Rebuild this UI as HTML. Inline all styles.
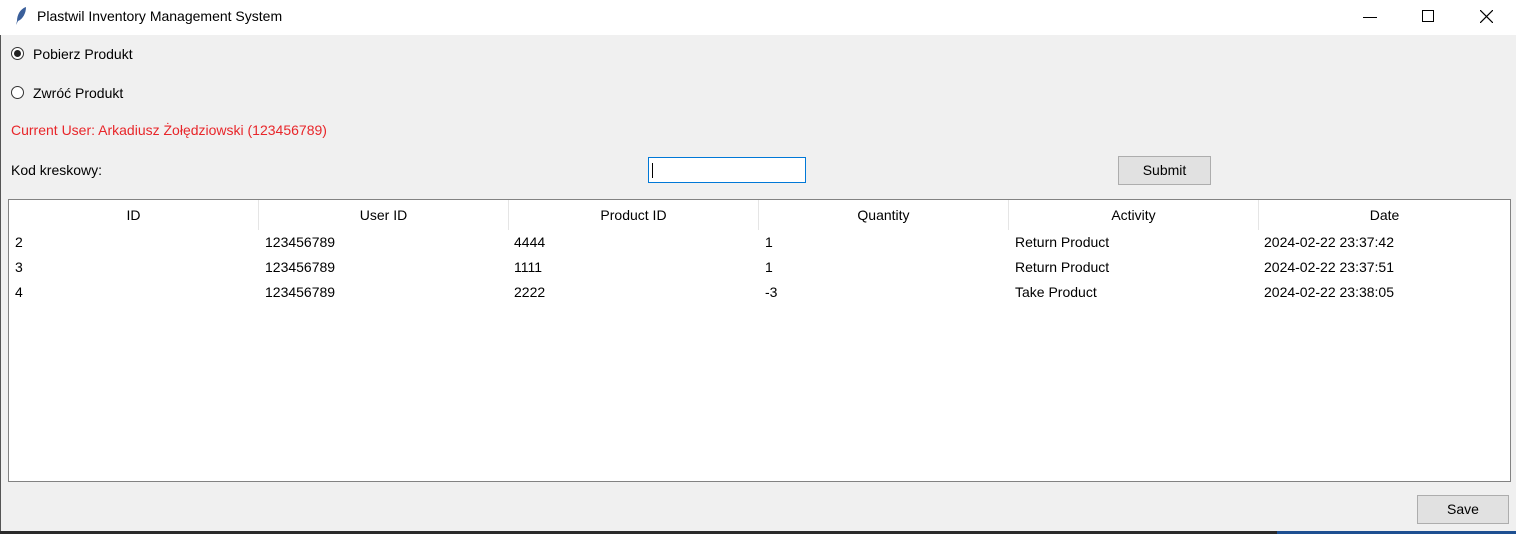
<!DOCTYPE html>
<html><head><meta charset="utf-8"><style>
body{margin:0;width:1516px;height:534px;overflow:hidden;background:#f0f0f0;font-family:"Liberation Sans","DejaVu Sans",sans-serif;font-size:14px;color:#000;position:relative}
.a{position:absolute;white-space:nowrap}
.tb{position:absolute;left:0;top:0;width:1516px;height:35px;background:#fff}
.btn{position:absolute;background:#e1e1e1;border:1px solid #adadad;box-sizing:border-box;text-align:center}
.radio{position:absolute;width:13px;height:13px;border:1px solid #333;border-radius:50%;background:#fff;box-sizing:border-box}
.tbl{position:absolute;left:8px;top:199px;width:1503px;height:283px;border:1px solid #828282;box-sizing:border-box;background:#fff}
.h{position:absolute;top:0;height:30px;line-height:30px;text-align:center;border-right:1px solid #e5e5e5;box-sizing:border-box}
</style></head><body>
<div class="tb"></div>
<svg class="a" style="left:14px;top:6px" width="14" height="20" viewBox="0 0 14 20"><path d="M12 1 C6 3 3 9 3 15 L2 19 L4 15 C9 13 12 7 12 1Z" fill="#3a5f9a"/></svg>
<div class="a" style="left:37px;top:8px">Plastwil Inventory Management System</div>
<div class="a" style="left:1363px;top:17px;width:14px;height:1px;background:#000"></div>
<div class="a" style="left:1422px;top:10px;width:10px;height:10px;border:1px solid #000"></div>
<svg class="a" style="left:1480px;top:10px" width="13" height="13"><path d="M0 0L13 13M13 0L0 13" stroke="#000" stroke-width="1.2"/></svg>
<div class="a" style="left:0;top:35px;width:1px;height:496px;background:#555"></div>
<div class="radio" style="left:11px;top:47px"><div style="position:absolute;left:2px;top:2px;width:7px;height:7px;border-radius:50%;background:#222"></div></div>
<div class="a" style="left:33px;top:46px">Pobierz Produkt</div>
<div class="radio" style="left:11px;top:86px"></div>
<div class="a" style="left:33px;top:85px">Zwróć Produkt</div>
<div class="a" style="left:11px;top:122px;color:#e8262a">Current User: Arkadiusz Żołędziowski (123456789)</div>
<div class="a" style="left:11px;top:162px">Kod kreskowy:</div>
<div class="a" style="left:648px;top:157px;width:158px;height:26px;border:1px solid #0078d7;background:#fff;box-sizing:border-box"><div style="position:absolute;left:3px;top:5px;width:1px;height:15px;background:#000"></div></div>
<div class="btn" style="left:1118px;top:156px;width:93px;height:29px;line-height:27px">Submit</div>
<div class="tbl">
<div class="h" style="left:0;width:250px">ID</div>
<div class="h" style="left:250px;width:250px">User ID</div>
<div class="h" style="left:500px;width:250px">Product ID</div>
<div class="h" style="left:750px;width:250px">Quantity</div>
<div class="h" style="left:1000px;width:250px">Activity</div>
<div class="h" style="left:1250px;width:251px;border:0">Date</div>
</div>
<div class="a" style="left:15px;top:230px;line-height:25px">2<br>3<br>4</div>
<div class="a" style="left:265px;top:230px;line-height:25px">123456789<br>123456789<br>123456789</div>
<div class="a" style="left:514px;top:230px;line-height:25px">4444<br>1111<br>2222</div>
<div class="a" style="left:765px;top:230px;line-height:25px">1<br>1<br>-3</div>
<div class="a" style="left:1015px;top:230px;line-height:25px">Return Product<br>Return Product<br>Take Product</div>
<div class="a" style="left:1264px;top:230px;line-height:25px">2024-02-22 23:37:42<br>2024-02-22 23:37:51<br>2024-02-22 23:38:05</div>
<div class="btn" style="left:1417px;top:495px;width:92px;height:29px;line-height:27px">Save</div>
<div class="a" style="left:0;top:531px;width:1516px;height:3px;background:#2a2a2a"></div>
<div class="a" style="left:1277px;top:531px;width:239px;height:3px;background:#1d4f91"></div>
</body></html>
